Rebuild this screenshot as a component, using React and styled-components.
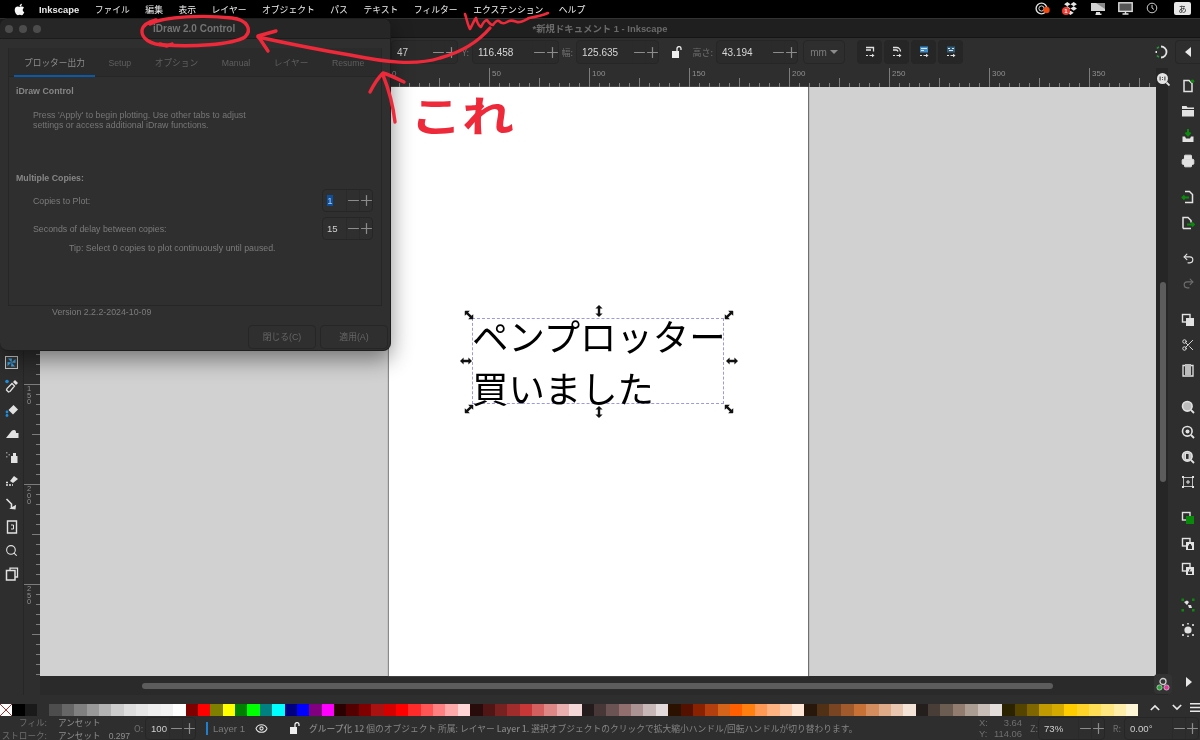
import React from 'react'
import styled, { createGlobalStyle } from 'styled-components'
import { FaApple } from 'react-icons/fa'
import { Minus, Plus, Scissors, Printer, Undo2, Redo2, Eye, Search } from 'lucide-react'

const GlobalStyle = createGlobalStyle`
  html, body { margin: 0; padding: 0; background: #000; }
  * { box-sizing: border-box; }
`

const FONT = `"Liberation Sans", "Noto Sans CJK JP", sans-serif`
const JP = `"Noto Sans CJK JP", "Liberation Sans", sans-serif`
const MENUS = ['ファイル', '編集', '表示', 'レイヤー', 'オブジェクト', 'パス', 'テキスト', 'フィルター', 'エクステンション', 'ヘルプ']
const TABS = ['プロッター出力', 'Setup', 'オプション', 'Manual', 'レイヤー', 'Resume']
const SWATCHES = [
  '#4d4d4d', '#666666', '#808080', '#999999', '#b3b3b3', '#cccccc', '#dddddd', '#e6e6e6', '#eeeeee', '#f2f2f2', '#ffffff',
  '#800000', '#ff0000', '#808000', '#ffff00', '#008000', '#00ff00', '#008080', '#00ffff', '#000080', '#0000ff', '#800080', '#ff00ff',
  '#2b0000', '#550000', '#800000', '#aa1111', '#d40000', '#ff0000', '#ff2a2a', '#ff5555', '#ff8080', '#ffaaaa', '#ffd5d5',
  '#280b0b', '#501616', '#782121', '#a02c2c', '#c83737', '#d35f5f', '#de8787', '#e9afaf', '#f4d7d7',
  '#241c1c', '#483737', '#6c5353', '#916f6f', '#ac9393', '#c8b7b7', '#e3dbdb',
  '#2b1100', '#551100', '#882200', '#b33e0e', '#d4641a', '#ff5f00', '#ff8010', '#ff9955', '#ffb380', '#ffccaa', '#ffe6d5',
  '#28170b', '#503116', '#784421', '#a05a2c', '#c87137', '#d38d5f', '#deaa87', '#e9c6af', '#f4e3d7',
  '#241f1c', '#483e37', '#6c5d53', '#917c6f', '#ac9d93', '#c8beb7', '#e3dedb',
  '#2b2200', '#554400', '#806600', '#c09a00', '#d4aa00', '#ffcc00', '#ffd42a', '#ffdd55', '#ffe680', '#ffeeaa', '#fff6d5',
]

const Ico = ({ children, size = 14 }) => (
  <svg width={size} height={size} viewBox="0 0 14 14" fill="none">{children}</svg>
)

const W = '#e2e2e2'
const G = '#0a8a0a'
const Doc = () => <path d="M3 1.5h5l3 3v8H3z" stroke={W} strokeWidth="1.5" fill="#2e2e2e" />
const Mag = ({ dot }) => (
  <>
    <circle cx="6.3" cy="6.3" r="4.8" stroke={W} strokeWidth="1.6" fill={dot ? '#2e2e2e' : '#bdbdbd'} />
    <path d="M10 10l3 3" stroke={W} strokeWidth="1.8" />
    {dot && <circle cx="6.5" cy="6.5" r="2" fill={W} />}
  </>
)
const Stack = ({ front = W, children }) => (
  <>
    <rect x="1.5" y="1.5" width="7.5" height="7.5" fill="#2e2e2e" stroke={W} strokeWidth="1.4" />
    <rect x="5" y="5" width="8" height="8" fill={front} />
    {children}
  </>
)

const RIGHT_GROUPS = [
  [
    <Ico><Doc /><circle cx="11.5" cy="2.2" r="1.8" fill={G} /></Ico>,
    <Ico><path d="M1 2h4.5l1 1.5H13V5H4l-3 0zM1 6h12v6.5H1z" fill={W} /></Ico>,
    <Ico><path d="M7 0v5M4.5 3.5L7 6.5l2.5-3" stroke={G} strokeWidth="2" /><path d="M1.5 7.5h2.5l1 2h4l1-2h2.5V13h-11z" fill={W} /></Ico>,
    <Printer size={14} color={W} fill={W} strokeWidth={1.6} />,
  ],
  [
    <Ico><path d="M4 1.5h4.5l3 3v8H4" stroke={W} strokeWidth="1.5" /><path d="M8 7.5H1.5M3.5 5.5l-2 2 2 2" stroke={G} strokeWidth="1.8" /></Ico>,
    <Ico><path d="M2 12.5v-11h5l3 3v2M2 12.5h8" stroke={W} strokeWidth="1.5" /><path d="M6 8.5h7M11 6.5l2 2-2 2" stroke={G} strokeWidth="1.8" /></Ico>,
  ],
  [
    <Undo2 size={13} color={W} strokeWidth={2} />,
    <Redo2 size={13} color="#6e6e6e" strokeWidth={2} />,
  ],
  [
    <Ico><Stack /></Ico>,
    <Scissors size={14} color={W} strokeWidth={1.6} />,
    <Ico><path d="M2 2.5h10v10.5H2z" stroke={W} strokeWidth="1.3" /><rect x="4" y="1" width="6" height="11" fill="#bdbdbd" /></Ico>,
  ],
  [
    <Ico><Mag /></Ico>,
    <Ico><Mag dot /></Ico>,
    <Ico><Mag /><rect x="4.5" y="3.4" width="3.6" height="6" fill="#2e2e2e" stroke={W} /></Ico>,
    <Ico><path d="M2.5 2.5h9v9h-9z" stroke="#bdbdbd" strokeWidth="1" /><path d="M1 1h2v2H1zM11 1h2v2h-2zM1 11h2v2H1zM11 11h2v2h-2z" fill={W} /><path d="M5 7h4M7 5v4" stroke={W} /></Ico>,
  ],
  [
    <Ico><Stack front={G} /></Ico>,
    <Ico><Stack><path d="M7 8.5h4V12H7zM8 8.5V7h2v1.5" fill="#2e2e2e" /></Stack></Ico>,
    <Ico><Stack><path d="M7 9.5h4V12H7zM8 9.5V7.5h2" fill="#2e2e2e" /></Stack></Ico>,
  ],
  [
    <Ico><path d="M3 4l3-1.5 2 1.5-2 3zM7 7l3 0 1 3-3 0z" fill={W} /><path d="M0.5 0.5h2.5v2.5H.5zM11 .5h2.5V3H11zM.5 11H3v2.5H.5zM11 11h2.5v2.5H11z" fill={G} /></Ico>,
    <Ico><circle cx="7" cy="7" r="3.6" fill={W} /><path d="M1 1h2v2H1zM11 1h2v2h-2zM1 11h2v2H1zM11 11h2v2h-2zM6 0h2v1.4H6zM6 12.6h2V14H6z" fill="#bdbdbd" /></Ico>,
  ],
]

const LEFT_TOOLS = [
  <PinwheelButton key="sel" />,
  <Ico key="dropper"><path d="M5 12.5L3.5 13l-2-2L2 9.5l5-5 2.5 2.5z" stroke={W} strokeWidth="1.3" /><path d="M8 3l2-2 3 3-2 2z" fill={W} /><circle cx="2" cy="2.5" r="1.8" fill="#1a8fe0" /></Ico>,
  <Ico key="bucket"><path d="M3.5 7l5-5 4.5 4.5-5 5z" fill={W} /><circle cx="2" cy="9" r="1.4" fill="#1a8fe0" /><circle cx="2" cy="12.5" r="1.4" fill="#1a8fe0" /></Ico>,
  <Ico key="eraser"><path d="M1 12l4-5c1-1.5 2-3 4-3s2 1.5 2 3h2.5v5z" fill={W} /></Ico>,
  <Ico key="spray"><path d="M6 6h6.5v7H6zM8 3h3v3H8z" fill={W} /><path d="M1 2h1.5v1.5H1zM3.5 4H5v1.5H3.5zM1 6h1.5v1.5H1z" fill="#8a8a8a" /></Ico>,
  <Ico key="paint"><path d="M5 8l4-5 4 3-5 4z" fill={W} /><path d="M1 12h7M1 9.5h2" stroke={W} strokeWidth="1.5" strokeDasharray="2 1" /></Ico>,
  <Ico key="connector"><path d="M1.5 2l5 5v4" stroke={W} strokeWidth="1.6" /><path d="M9 13l-5-4h8z" fill={W} transform="rotate(-30 9 10)" /></Ico>,
  <Ico key="pages"><path d="M2.5 1h9v12h-9z" stroke={W} strokeWidth="1.4" /><path d="M6 5h2.5v4H6" stroke={W} /></Ico>,
  <Search key="zoom" size={13} color={W} strokeWidth={2} />,
  <Ico key="copies"><path d="M5 3V1.2h7.5V10H10" stroke={W} strokeWidth="1.3" /><path d="M1.5 3.5h8.5V13H1.5z" stroke={W} strokeWidth="1.5" fill="#2e2e2e" /></Ico>,
]

function PinwheelButton() {
  return (
    <svg width="13" height="13" viewBox="0 0 13 13">
      <rect x=".5" y=".5" width="12" height="12" fill="#3a3a3a" stroke="#c8c8c8" />
      <path d="M6.5 6.5L3 2.5h4zM6.5 6.5l4-3.5v4zM6.5 6.5l3.5 4H6zM6.5 6.5l-4 3.5V6z" fill="#38a4e6" />
    </svg>
  )
}

const Dashes = () => (
  <>
    <path d="M3 10.5h2M6.5 10.5h3" stroke={W} strokeWidth="1.2" />
    <path d="M9 8.7l2.5 1.8L9 12.3z" fill={W} />
  </>
)
const TOOL_ICONS = [
  <Ico><path d="M3 2.5h7.5v4M3 5h5" stroke={W} strokeWidth="1.3" /><Dashes /></Ico>,
  <Ico><path d="M3 2.5h3.5a4 4 0 0 1 4 4M3 5h3a2 2 0 0 1 2 1.5" stroke={W} strokeWidth="1.3" /><Dashes /></Ico>,
  <Ico><rect x="3" y="1.5" width="8" height="6" fill="#3b8fd0" /><path d="M4 3.5h6M4 5.5h3" stroke={W} /><Dashes /></Ico>,
  <Ico><rect x="3" y="1.5" width="8" height="6" fill="#2f5f7f" /><path d="M4 3.5h2M8 3.5h2M5 5.5h4" stroke={W} /><Dashes /></Ico>,
]

const Spinners = () => (
  <>
    <SpinBtn><Minus size={17} strokeWidth={1.7} /></SpinBtn>
    <SpinBtn><Plus size={17} strokeWidth={1.7} /></SpinBtn>
  </>
)

const Field = ({ w, children }) => (
  <FieldBox $w={w}>
    <FieldValue>{children}</FieldValue>
    <Spinners />
  </FieldBox>
)

const HANDLES = [
  [-4, -4, 45], [126, -8, 90], [256, -4, -45],
  [-7, 42, 0], [259, 42, 0],
  [-4, 90, -45], [126, 93, 90], [256, 90, 45],
]

const RULER_X = [0, 50, 100, 150, 200, 250, 300, 350]
const RULER_Y = [150, 200, 250]

export default function App() {
  return (
    <Screen>
      <GlobalStyle />
      <MenuBar>
        <FaApple size={13} color="#fff" />
        <AppName>Inkscape</AppName>
        {MENUS.map(m => <MenuItem key={m}>{m}</MenuItem>)}
        <Tray>
          <TrayIcon $x={1035}>
            <svg width="15" height="13" viewBox="0 0 15 13" fill="none">
              <circle cx="6.5" cy="6.5" r="5.4" stroke="#ddd" strokeWidth="1.4" />
              <circle cx="6.5" cy="6.5" r="2.6" stroke="#ddd" />
              <circle cx="11.5" cy="8" r="3.2" fill="#f04a10" />
            </svg>
          </TrayIcon>
          <TrayIcon $x={1063}>
            <svg width="15" height="13" viewBox="0 0 14 12">
              <path d="M4 0l3 2-3 2-3-2zM10 0l3 2-3 2-3-2zM4 4l3 2-3 2-3-2zM10 4l3 2-3 2-3-2zM7 8l3 2-3 2-3-2z" fill="#e6e6e6" />
            </svg>
            <TrayBadge>1</TrayBadge>
          </TrayIcon>
          <TrayIcon $x={1091}>
            <svg width="14" height="13" viewBox="0 0 14 13">
              <path d="M0 1h14v8H0z" fill="#d2d2d2" /><path d="M5 1h9v6z" fill="#8a8a8a" /><path d="M5 10h4v1.5h1.5V13h-6v-1.5H5z" fill="#ddd" />
            </svg>
          </TrayIcon>
          <TrayIcon $x={1118}>
            <svg width="15" height="13" viewBox="0 0 15 13" fill="none">
              <rect x=".8" y=".8" width="13.4" height="8.6" stroke="#ddd" strokeWidth="1.4" fill="#555" /><path d="M4.5 12h6M7.5 9.5V12" stroke="#ddd" strokeWidth="1.4" />
            </svg>
          </TrayIcon>
          <TrayIcon $x={1146}>
            <svg width="12" height="12" viewBox="0 0 12 12" fill="none">
              <circle cx="6" cy="6" r="4.8" stroke="#ccc" /><path d="M6 3v3l2 1.5" stroke="#ccc" />
            </svg>
          </TrayIcon>
          <InputMethod>あ</InputMethod>
        </Tray>
      </MenuBar>

      <TitleBar>*新規ドキュメント 1 - Inkscape</TitleBar>

      <ToolBar>
        <Field w={67}>47</Field>
        <FieldLabel $w={14}>Y:</FieldLabel>
        <Field w={87}>116.458</Field>
        <FieldLabel $w={17}>幅:</FieldLabel>
        <Field w={83}>125.635</Field>
        <LockSlot>
          <svg width="10" height="12" viewBox="0 0 10 12" fill="none">
            <path d="M5 5V2.6a2 2 0 0 1 4 0V4" stroke="#eee" strokeWidth="1.3" /><rect x="0" y="5" width="7" height="7" fill="#eee" />
          </svg>
        </LockSlot>
        <FieldLabel $w={25}>高さ:</FieldLabel>
        <Field w={82}>43.194</Field>
        <UnitSelect>mm<Caret /></UnitSelect>
        <ToolGroup>
          {TOOL_ICONS.map((icon, i) => <ToolBtn key={i}>{icon}</ToolBtn>)}
        </ToolGroup>
        <SnapSlot>
          <svg width="14" height="14" viewBox="0 0 14 14" fill="none">
            <path d="M7 1.5a5.5 5.5 0 0 1 0 11" stroke="#e2e2e2" strokeWidth="1.8" />
            <path d="M5 2a5.5 5.5 0 0 0-2 1.5M5 12a5.5 5.5 0 0 1-2-1.5" stroke="#1f9a3a" strokeWidth="1.8" />
            <path d="M1.5 6h1.5v2H1.5z" fill="#e2e2e2" />
          </svg>
        </SnapSlot>
        <CollapseBtn>
          <svg width="7" height="10" viewBox="0 0 7 10"><path d="M6 0v10L0 5z" fill="#e8e8e8" /></svg>
        </CollapseBtn>
      </ToolBar>

      <Workspace>
        <LeftBox>
          {LEFT_TOOLS.map((icon, i) => <LeftTool key={i}>{icon}</LeftTool>)}
        </LeftBox>

        <Center>
          <Corner />
          <TopRuler>
            {RULER_X.map(n => <TopLabel key={n} $x={349 + n * 2 + 3}>{n}</TopLabel>)}
          </TopRuler>
          <SideRuler>
            {RULER_Y.map(n => <SideLabel key={n} $y={n * 2 - 1}>{n}</SideLabel>)}
          </SideRuler>
          <Canvas>
            <Page>
              <Selection>
                <PlotText>ペンプロッター<br />買いました</PlotText>
                {HANDLES.map(([x, y, r], i) => (
                  <Handle key={i} $x={x} $y={y} $r={r} viewBox="0 0 10 10">
                    <path d="M0 5l3-3v2h4V2l3 3-3 3V6H3v2z" fill="#111" />
                  </Handle>
                ))}
              </Selection>
            </Page>
          </Canvas>
          <RulerFoot />
          <HScroll><HThumb /></HScroll>
        </Center>

        <VScroll>
          <ZoomOne>
            <svg width="14" height="14" viewBox="0 0 14 14">
              <circle cx="6.5" cy="6.5" r="5.5" fill="#e4e4e4" /><path d="M10.5 10.5l3 3" stroke="#e4e4e4" strokeWidth="1.8" />
              <path d="M3.6 4.5h1v4h-1zM8.4 4.5h1v4h-1zM6.2 5h.8v.9h-.8zM6.2 7h.8v.9h-.8z" fill="#333" />
            </svg>
          </ZoomOne>
          <VThumb />
          <ColorMode>
            <svg width="14" height="14" viewBox="0 0 14 14" fill="none">
              <circle cx="7" cy="4.5" r="3" stroke="#cfcfcf" strokeWidth="1.3" />
              <circle cx="3.5" cy="10.5" r="2.6" fill="#2aa53a" stroke="#ddd" strokeWidth=".7" />
              <circle cx="10.5" cy="10.5" r="2.6" fill="#e0379a" stroke="#ddd" strokeWidth=".7" />
            </svg>
          </ColorMode>
        </VScroll>

        <RightBar>
          {RIGHT_GROUPS.map((group, i) => (
            <RightGroup key={i}>
              {group.map((icon, j) => <RightTool key={j}>{icon}</RightTool>)}
            </RightGroup>
          ))}
          <RightMore>
            <svg width="7" height="10" viewBox="0 0 7 10"><path d="M1 0v10l6-5z" fill="#e8e8e8" /></svg>
          </RightMore>
        </RightBar>
      </Workspace>

      <PaletteRow>
        <NoneSwatch />
        <Swatch $c="#000" />
        <Swatch $c="#1a1a1a" />
        <SwatchGap />
        {SWATCHES.map((c, i) => <Swatch key={i} $c={c} />)}
        <PaletteTools>
          <PaletteArrow viewBox="0 0 12 8"><path d="M1 7l5-5 5 5" /></PaletteArrow>
          <PaletteArrow viewBox="0 0 12 8"><path d="M1 1l5 5 5-5" /></PaletteArrow>
          <Burger viewBox="0 0 12 11"><path d="M0 1.5h12M0 5.5h12M0 9.5h12" /></Burger>
        </PaletteTools>
      </PaletteRow>

      <StatusBar>
        <StyleInfo>
          <StyleKey>フィル:</StyleKey><StyleVal>アンセット</StyleVal>
          <StyleKey>ストローク:</StyleKey><StyleVal>アンセット<Thin>0.297</Thin></StyleVal>
        </StyleInfo>
        <FieldLabel $w={11}>O:</FieldLabel>
        <StatusField><FieldValue>100</FieldValue><Spinners /></StatusField>
        <LayerMark />
        <LayerName>Layer 1</LayerName>
        <EyeSlot><Eye size={13} color="#e6e6e6" strokeWidth={2} /></EyeSlot>
        <LockSmall>
          <svg width="10" height="12" viewBox="0 0 10 12" fill="none">
            <path d="M5 5V2.6a2 2 0 0 1 4 0V4" stroke="#eee" strokeWidth="1.3" /><rect x="0" y="5" width="7" height="7" fill="#eee" />
          </svg>
        </LockSmall>
        <Message>
          <b>グループ化 12</b> 個のオブジェクト 所属: レイヤー <b>Layer 1</b>. 選択オブジェクトのクリックで拡大縮小ハンドル/回転ハンドルが切り替わります。
        </Message>
        <Coords>
          <span>X:</span><CoordVal>3.64</CoordVal>
          <span>Y:</span><CoordVal>114.06</CoordVal>
        </Coords>
        <FieldLabel $w={8}>Z:</FieldLabel>
        <StatusField $w={67}><FieldValue>73%</FieldValue><Spinners /></StatusField>
        <FieldLabel $w={19}>R:</FieldLabel>
        <StatusField $w={75}><FieldValue>0.00°</FieldValue><Spinners /></StatusField>
      </StatusBar>

      <Dialog>
        <DialogTitle>
          <Lights><i /><i /><i /></Lights>
          iDraw 2.0 Control
        </DialogTitle>
        <Notebook>
          <TabBar>
            {TABS.map((t, i) => <Tab key={t} $active={i === 0}>{t}</Tab>)}
          </TabBar>
          <TabPage>
            <Heading>iDraw Control</Heading>
            <Blurb>
              Press 'Apply' to begin plotting. Use other tabs to adjust<br />
              settings or access additional iDraw functions.
            </Blurb>
            <Heading $top={42}>Multiple Copies:</Heading>
            <SpinRow $top={5}>
              Copies to Plot:
              <SpinBox><SpinValue><Selected>1</Selected></SpinValue><Spinners /></SpinBox>
            </SpinRow>
            <SpinRow $top={5}>
              Seconds of delay between copies:
              <SpinBox><SpinValue>15</SpinValue><Spinners /></SpinBox>
            </SpinRow>
            <Tip>Tip: Select 0 copies to plot continuously until paused.</Tip>
          </TabPage>
        </Notebook>
        <Version>Version 2.2.2-2024-10-09</Version>
        <DialogButtons>
          <DialogBtn>閉じる(C)</DialogBtn>
          <DialogBtn>適用(A)</DialogBtn>
        </DialogButtons>
      </Dialog>

      <Scribble viewBox="0 0 1200 740">
        <path d="M150 24C165 16 205 15 232 18C248 20 252 30 245 37C232 45 190 47 165 45C150 45 141 38 142 30C143 25 148 22 156 20" />
        <path d="M160 44l7 2 5-2" />
        <path d="M490 28C478 42 462 52 440 58C415 66 385 62 350 55C320 50 290 44 258 37" />
        <path d="M276 31L258 36L268 51" />
        <path d="M465 14C467 20 468 26 470 29C473 24 474 20 476 18C477 22 479 26 481 27C483 23 485 20 487 20C489 23 491 25 493 25C495 22 497 20 499 21C502 24 504 24 507 22C511 19 514 21 517 22C521 23 525 20 529 18C535 17 541 16 548 13" strokeWidth="2.6" />
        <path d="M395 122C393 105 389 90 383 75" />
        <path d="M370 92C374 84 378 78 383 73C390 75 398 79 404 82" />
      </Scribble>
      <Kore>これ</Kore>
    </Screen>
  )
}

const Screen = styled.div`
  position: relative;
  width: 1200px;
  height: 740px;
  overflow: hidden;
  display: flex;
  flex-direction: column;
  background: #2e2e2e;
  font-family: ${FONT};
  filter: blur(0.35px);
`
const MenuBar = styled.div`
  height: 18px;
  flex: none;
  display: flex;
  align-items: center;
  padding-left: 13px;
  background: #000;
  color: #f2f2f2;
  font-family: ${JP};
  font-size: 8.8px;
`
const AppName = styled.span`
  font-family: ${FONT};
  font-weight: 700;
  font-size: 9.4px;
  margin: 0 15.5px 0 13px;
`
const MenuItem = styled.span`
  margin-right: 15.5px;
  white-space: nowrap;
`
const Tray = styled.div`
  position: absolute;
  top: 0;
  left: 0;
`
const TrayIcon = styled.span`
  position: absolute;
  top: 2px;
  left: ${p => p.$x}px;
  display: block;
  line-height: 0;
`
const TrayBadge = styled.span`
  position: absolute;
  left: -1px;
  top: 5px;
  width: 8px;
  height: 8px;
  border-radius: 50%;
  background: #f03a30;
  color: #fff;
  font: 700 6px/8px ${FONT};
  text-align: center;
`
const InputMethod = styled.span`
  position: absolute;
  left: 1174px;
  top: 2px;
  width: 17px;
  height: 13px;
  border-radius: 2px;
  background: #e8e8e8;
  color: #111;
  font: 8px/13px ${JP};
  text-align: center;
`
const TitleBar = styled.div`
  height: 20px;
  flex: none;
  background: #1f1f1f;
  border-top: 1px solid #333;
  border-bottom: 1px solid #151515;
  color: #6a6a6a;
  font-size: 9.4px;
  font-weight: 700;
  line-height: 19px;
  text-align: center;
  padding-left: 0;
`
const ToolBar = styled.div`
  height: 30px;
  flex: none;
  display: flex;
  align-items: center;
  padding: 0 0 2px 391px;
  background: #2e2e2e;
`
const FieldBox = styled.div`
  width: ${p => p.$w}px;
  height: 24px;
  flex: none;
  display: flex;
  align-items: center;
  background: #2b2b2b;
  border: 1px solid #262626;
  border-radius: 4px;
  color: #d6d6d6;
  font-size: 10px;
`
const FieldValue = styled.span`
  flex: 1;
  padding-left: 5px;
  white-space: nowrap;
`
const SpinBtn = styled.span`
  width: 13px;
  height: 100%;
  flex: none;
  display: flex;
  align-items: center;
  justify-content: center;
  border-left: 1px solid #2a2a2a;
  color: #8c8c8c;
  svg { flex: none; }
`
const FieldLabel = styled.span`
  width: ${p => p.$w}px;
  flex: none;
  padding-right: 3px;
  color: #6f6f6f;
  font-family: ${JP};
  font-size: 9px;
  text-align: right;
  white-space: nowrap;
`
const LockSlot = styled.span`
  width: 32px;
  flex: none;
  display: flex;
  justify-content: center;
  padding-left: 4px;
`
const UnitSelect = styled.div`
  width: 42px;
  height: 24px;
  margin-left: 5px;
  flex: none;
  display: flex;
  align-items: center;
  justify-content: center;
  gap: 3px;
  border: 1px solid #262626;
  border-radius: 4px;
  color: #7d7d7d;
  font-size: 10px;
`
const Caret = styled.i`
  width: 0;
  height: 0;
  border: 4px solid transparent;
  border-top: 4px solid #8c8c8c;
  border-bottom: 0;
`
const ToolGroup = styled.div`
  display: flex;
  gap: 2px;
  margin-left: 12px;
`
const ToolBtn = styled.span`
  width: 25px;
  height: 24px;
  display: flex;
  align-items: center;
  justify-content: center;
  background: #262626;
  border-radius: 4px;
`
const SnapSlot = styled.span`
  margin-left: auto;
  margin-right: 7px;
  line-height: 0;
`
const CollapseBtn = styled.span`
  width: 25px;
  height: 24px;
  flex: none;
  display: flex;
  align-items: center;
  justify-content: center;
  border: 1px solid #262626;
  border-right: 0;
  border-radius: 4px 0 0 4px;
`
const Workspace = styled.div`
  height: 627px;
  flex: none;
  display: flex;
`
const LeftBox = styled.div`
  width: 24px;
  flex: none;
  padding-top: 283px;
  border-right: 1px solid #262626;
`
const LeftTool = styled.div`
  height: 23.5px;
  display: flex;
  align-items: center;
  justify-content: center;
`
const Center = styled.div`
  width: 1132px;
  flex: none;
  display: grid;
  grid-template-columns: 16px 1116px;
  grid-template-rows: 19px 589px 19px;
`
const Corner = styled.div`
  background: #2e2e2e;
`
const tick = 'linear-gradient(90deg, #7c7c7c 1px, transparent 1px)'
const TopRuler = styled.div`
  position: relative;
  background-color: #2e2e2e;
  background-image: ${tick}, ${tick}, ${tick};
  background-size: 100px 100%, 50px 9px, 10px 4px;
  background-position: 49px 0, 49px bottom, 49px bottom;
  background-repeat: repeat-x;
`
const TopLabel = styled.span`
  position: absolute;
  left: ${p => p.$x}px;
  top: 1px;
  color: #8f8f8f;
  font-size: 8px;
  line-height: 9px;
`
const vtick = 'linear-gradient(180deg, #7c7c7c 1px, transparent 1px)'
const SideRuler = styled.div`
  position: relative;
  background-color: #2e2e2e;
  background-image: ${vtick}, ${vtick}, ${vtick};
  background-size: 100% 100px, 8px 50px, 4px 10px;
  background-position: 0 97px, right 97px, right 97px;
  background-repeat: repeat-y;
`
const SideLabel = styled.span`
  position: absolute;
  left: 2px;
  top: ${p => p.$y}px;
  width: 6px;
  color: #8f8f8f;
  font-size: 7.5px;
  line-height: 6.6px;
  text-align: center;
  word-break: break-all;
`
const Canvas = styled.div`
  display: flex;
  padding-left: 349px;
  background: #d1d1d1;
`
const Page = styled.div`
  position: relative;
  width: 419px;
  background: #fff;
  box-shadow: 1px 0 1px #6f6f6f, -1px 0 1px #8a8a8a;
`
const Selection = styled.div`
  position: absolute;
  left: 83px;
  top: 231px;
  width: 252px;
  height: 86px;
  border: 1px dashed #9a9ae2;
`
const PlotText = styled.div`
  margin: -10px 0 0 -1px;
  color: #000;
  font-family: ${JP};
  font-size: 36.4px;
  line-height: 52px;
  white-space: nowrap;
`
const Handle = styled.svg`
  position: absolute;
  left: ${p => p.$x}px;
  top: ${p => p.$y}px;
  width: 12px;
  height: 12px;
  transform: translate(-50%, -50%) rotate(${p => p.$r}deg);
`
const RulerFoot = styled.div`
  background: #2e2e2e;
`
const HScroll = styled.div`
  display: flex;
  align-items: center;
  padding-left: 102px;
  background: #2a2a2a;
`
const HThumb = styled.div`
  width: 911px;
  height: 6px;
  border-radius: 3px;
  background: #5c5c5c;
`
const VScroll = styled.div`
  width: 12px;
  flex: none;
  display: flex;
  flex-direction: column;
  align-items: center;
  background: #262626;
`
const ZoomOne = styled.div`
  height: 22px;
  display: flex;
  align-items: center;
  margin-left: 2px;
`
const VThumb = styled.div`
  width: 6px;
  height: 200px;
  margin-top: 192px;
  margin-left: 2px;
  border-radius: 3px;
  background: #5c5c5c;
`
const ColorMode = styled.div`
  margin-top: auto;
  margin-bottom: 1px;
  width: 18px;
  height: 20px;
  margin-left: 1px;
  display: flex;
  align-items: center;
  justify-content: center;
  border-radius: 4px;
  background: #333;
`
const RightBar = styled.div`
  width: 32px;
  flex: none;
  display: flex;
  flex-direction: column;
  padding: 5px 0 0 8px;
`
const RightGroup = styled.div`
  margin-bottom: 11px;
`
const RightTool = styled.div`
  height: 25.2px;
  display: flex;
  align-items: center;
  justify-content: center;
`
const RightMore = styled.div`
  margin-top: auto;
  margin-bottom: 8px;
  display: flex;
  justify-content: center;
`
const PaletteRow = styled.div`
  height: 21px;
  flex: none;
  display: flex;
  align-items: flex-start;
  padding-top: 9px;
  background: #2e2e2e;
`
const Swatch = styled.i`
  width: 12.38px;
  height: 12px;
  flex: none;
  background: ${p => p.$c};
`
const NoneSwatch = styled(Swatch)`
  background:
    linear-gradient(45deg, transparent 46%, #b03030 46% 54%, transparent 54%),
    linear-gradient(-45deg, transparent 46%, #b03030 46% 54%, transparent 54%),
    #fff;
`
const SwatchGap = styled.i`
  width: 12.3px;
  flex: none;
`
const PaletteTools = styled.div`
  flex: 1;
  display: flex;
  align-items: center;
  height: 12px;
  padding-left: 12px;
  gap: 12px;
  margin-top: -3px;
`
const PaletteArrow = styled.svg`
  width: 10px;
  height: 7px;
  fill: none;
  stroke: #e8e8e8;
  stroke-width: 2;
`
const Burger = styled.svg`
  width: 11px;
  height: 11px;
  margin-left: -4px;
  fill: none;
  stroke: #e8e8e8;
  stroke-width: 1.6;
`
const StatusBar = styled.div`
  height: 24px;
  flex: none;
  display: flex;
  align-items: center;
  background: #2e2e2e;
  color: #858585;
  font-family: ${JP};
  font-size: 8.6px;
`
const StyleInfo = styled.div`
  width: 134px;
  flex: none;
  display: grid;
  grid-template-columns: 47px auto;
  column-gap: 11px;
  line-height: 13px;
  margin-top: 3px;
`
const StyleKey = styled.span`
  color: #6e6e6e;
  text-align: right;
  white-space: nowrap;
`
const StyleVal = styled.span`
  white-space: nowrap;
  color: #8f8f8f;
`
const Thin = styled.span`
  margin-left: 8px;
  font-family: ${FONT};
`
const StatusField = styled.div`
  width: ${p => p.$w || 51}px;
  height: 23px;
  flex: none;
  display: flex;
  align-items: center;
  border: 1px solid #262626;
  border-radius: 4px;
  color: #cfcfcf;
  font-family: ${FONT};
  font-size: 9.6px;
`
const LayerMark = styled.i`
  width: 2px;
  height: 13px;
  margin: 0 5px 0 10px;
  flex: none;
  background: #1f7fd0;
`
const LayerName = styled.span`
  width: 41px;
  flex: none;
  color: #7a7a7a;
  font-family: ${FONT};
  font-size: 9.6px;
`
const EyeSlot = styled.span`
  width: 13px;
  flex: none;
  margin-left: 1px;
  line-height: 0;
`
const LockSmall = styled.span`
  width: 19px;
  flex: none;
  margin-left: 22px;
  line-height: 0;
`
const Message = styled.span`
  width: 660px;
  flex: none;
  font-size: 8.76px;
  white-space: nowrap;
  b { font-weight: 500; }
`
const Coords = styled.div`
  width: 51px;
  flex: none;
  display: grid;
  grid-template-columns: 12px 31px;
  color: #6f6f6f;
  font-family: ${FONT};
  font-size: 9.4px;
  line-height: 11px;
  margin-left: 10px;
`
const CoordVal = styled.span`
  text-align: right;
`
const Dialog = styled.div`
  position: absolute;
  left: 0;
  top: 18px;
  width: 391px;
  height: 333px;
  display: flex;
  flex-direction: column;
  background: #2f2f2f;
  border: 1px solid #1e1e1e;
  border-left: 0;
  border-radius: 8px;
  box-shadow: 0 8px 22px rgba(0, 0, 0, 0.45);
  color: #858585;
  font-size: 8.8px;
`
const DialogTitle = styled.div`
  position: relative;
  height: 20px;
  flex: none;
  background: #262626;
  border-radius: 8px 8px 0 0;
  border-bottom: 1px solid #1c1c1c;
  color: #747474;
  font-size: 10px;
  font-weight: 700;
  line-height: 19px;
  text-align: left;
  padding-left: 153px;
`
const Lights = styled.span`
  position: absolute;
  left: 5px;
  top: 6px;
  display: flex;
  gap: 6px;
  i {
    width: 8px;
    height: 8px;
    border-radius: 50%;
    background: #4c4c4c;
  }
`
const Notebook = styled.div`
  height: 258px;
  margin: 9px 8px 0;
  flex: none;
  display: flex;
  flex-direction: column;
  border: 1px solid #262626;
  border-top-color: #2b2b2b;
`
const TabBar = styled.div`
  height: 28px;
  flex: none;
  display: flex;
  gap: 3.6px;
  padding-left: 5px;
  border-bottom: 1px solid #262626;
  background: #2b2b2b;
`
const Tab = styled.span`
  height: 28px;
  padding: 0 10px;
  border-bottom: 2px solid ${p => (p.$active ? '#0c5aa6' : 'transparent')};
  color: ${p => (p.$active ? '#8e8e8e' : '#5f5f5f')};
  font-size: 8.7px;
  line-height: 28px;
  white-space: nowrap;
`
const TabPage = styled.div`
  flex: 1;
  padding: 8px 8px 0 7px;
`
const Heading = styled.div`
  margin-top: ${p => p.$top || 0}px;
  color: #868686;
  font-weight: 700;
  line-height: 12px;
`
const Blurb = styled.div`
  margin: 14px 0 0 17px;
  line-height: 9.6px;
  color: #777;
`
const SpinRow = styled.div`
  margin: ${p => p.$top}px 0 0 17px;
  display: flex;
  align-items: center;
  justify-content: space-between;
  color: #7c7c7c;
`
const SpinBox = styled.div`
  width: 51px;
  height: 23px;
  display: flex;
  align-items: center;
  border: 1px solid #262626;
  border-radius: 4px;
  color: #cfcfcf;
  font-size: 9.6px;
`
const SpinValue = styled.span`
  flex: 1;
  padding-left: 4px;
`
const Selected = styled.span`
  display: inline-block;
  width: 6px;
  background: #0c4f9c;
  color: #a8c8ee;
  text-align: center;
`
const Tip = styled.div`
  margin: 2px 0 0 53px;
  line-height: 12px;
  color: #7c7c7c;
`
const Version = styled.div`
  margin: 1px 0 0 52px;
  line-height: 11px;
  color: #7c7c7c;
`
const DialogButtons = styled.div`
  display: flex;
  justify-content: flex-end;
  gap: 4px;
  margin-top: 7px;
  padding-right: 2px;
`
const DialogBtn = styled.span`
  width: 68px;
  height: 24px;
  border: 1px solid #262626;
  border-radius: 4px;
  color: #666;
  font-size: 8.8px;
  line-height: 22px;
  text-align: center;
`
const Scribble = styled.svg`
  position: absolute;
  left: 0;
  top: 0;
  width: 1200px;
  height: 740px;
  pointer-events: none;
  fill: none;
  stroke: #ee2a3a;
  stroke-width: 3.4;
  stroke-linecap: round;
  stroke-linejoin: round;
`
const Kore = styled.span`
  position: absolute;
  left: 410px;
  top: 86px;
  color: #ee2a3a;
  font-family: ${JP};
  font-size: 52px;
  font-weight: 700;
  line-height: 70px;
  white-space: nowrap;
  pointer-events: none;
  transform: scaleY(0.8);
  transform-origin: top left;
`
